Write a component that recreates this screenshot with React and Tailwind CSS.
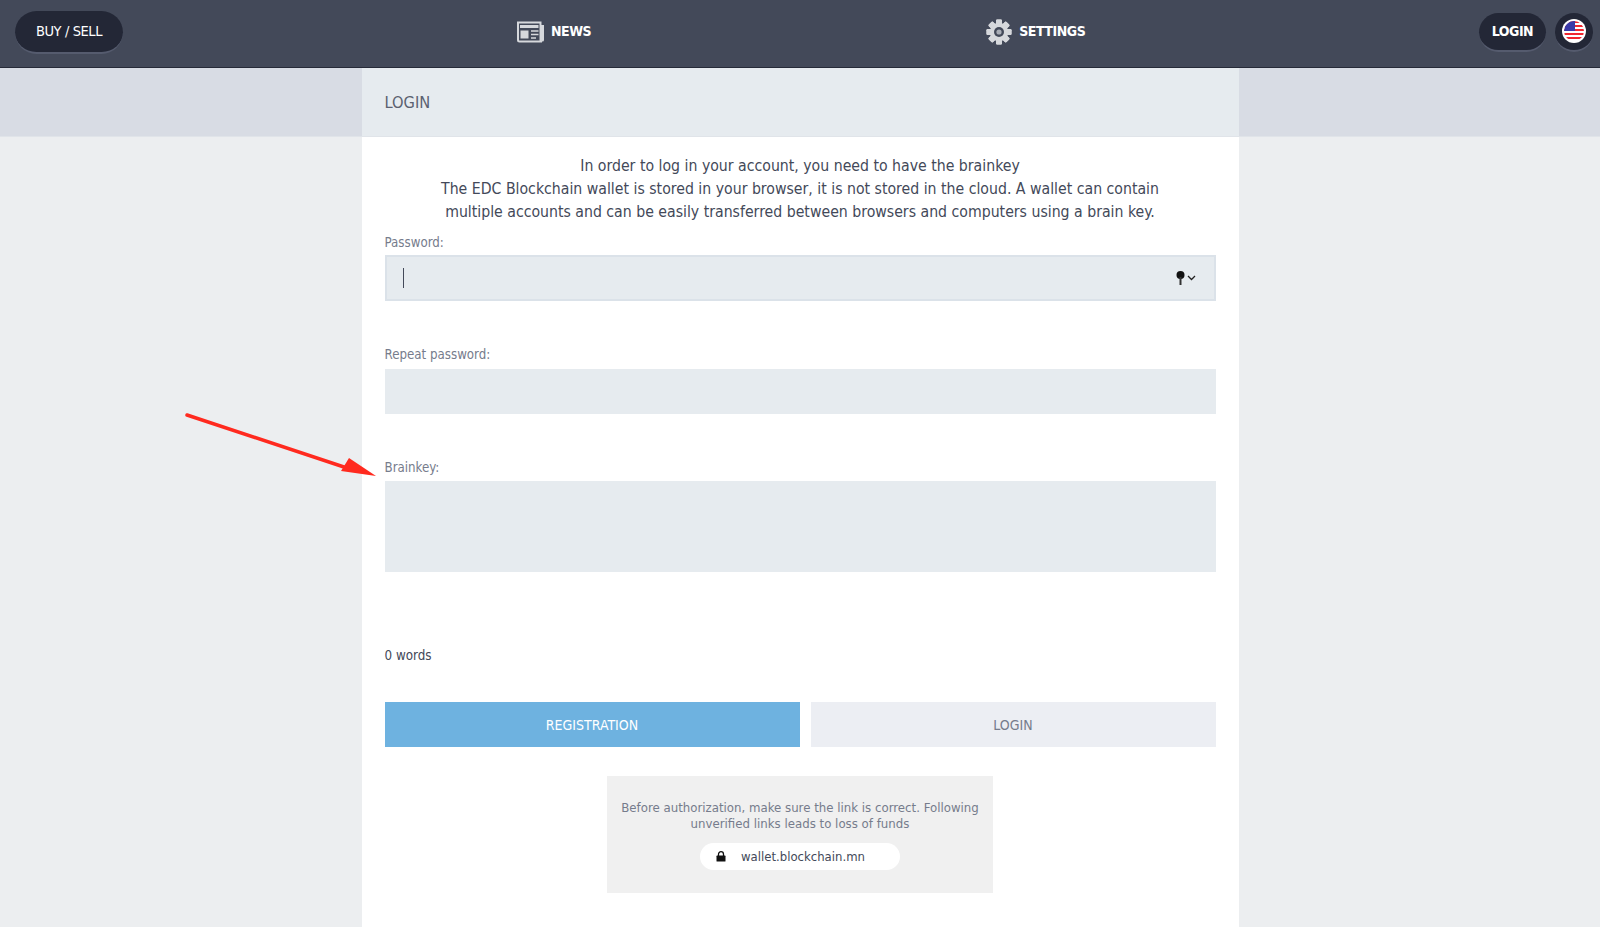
import React from "react";

function NewsIcon() {
  return (
    <svg width="28" height="22" viewBox="0 0 28 22" className="shrink-0">
      <path d="M1 1.500h22.500V19a1.500 1.500 0 0 0 1.500 1.500H2.500A1.500 1.500 0 0 1 1 19z" fill="none" stroke="#d6d8dc" strokeWidth="2" />
      <path d="M24.500 4H27v15a1.500 1.500 0 0 1-3 0V4z" fill="#d6d8dc" />
      <rect x="3" y="4" width="18.500" height="3" fill="#d6d8dc" />
      <rect x="3.500" y="9.500" width="8" height="8" fill="#d6d8dc" />
      <path d="M14 10h7.500M14 13.500h7.500M14 17h5" stroke="#d6d8dc" strokeWidth="1.600" />
    </svg>
  );
}

function GearIcon() {
  const teeth = [0, 45, 90, 135, 180, 225, 270, 315];
  return (
    <svg width="26" height="26" viewBox="0 0 26 26" className="shrink-0">
      {teeth.map((a) => (
        <rect key={a} x="10" y="0.500" width="6" height="25" rx="1.200" fill="#d6d8dc" transform={`rotate(${a} 13 13)`} />
      ))}
      <circle cx="13" cy="13" r="9.200" fill="#d6d8dc" />
      <circle cx="13" cy="13" r="5" fill="#434959" />
      <circle cx="13" cy="13" r="2.600" fill="#a9adb6" />
    </svg>
  );
}

function Flag() {
  return (
    <svg width="24" height="24" viewBox="0 0 24 24">
      <defs>
        <clipPath id="flagclip"><circle cx="12" cy="12" r="10" /></clipPath>
      </defs>
      <circle cx="12" cy="12" r="12" fill="#ffffff" />
      <g clipPath="url(#flagclip)">
        <rect x="0" y="0" width="24" height="24" fill="#ffffff" />
        <path d="M2 3h20M2 7h20M2 11h20M2 15h20M2 19h20" stroke="#f0262f" strokeWidth="2" />
        <rect x="0" y="0" width="13" height="12" fill="#3a3aa8" />
      </g>
    </svg>
  );
}

function Pill({ className, children }) {
  return (
    <div className={`flex items-center justify-center rounded-full bg-[#232736] border-b-2 border-[#555b6e] text-white ${className}`}>
      {children}
    </div>
  );
}

export default function App() {
  return (
    <div
      className="relative h-[927px] overflow-hidden bg-[#eceef0] text-[#434959]"
      style={{ fontFamily: '"DejaVu Sans Condensed", "DejaVu Sans", sans-serif' }}
    >
      <header className="flex h-[68px] items-center border-b border-[#262a38] bg-[#434959] pl-[15px] pr-[7px] pb-[3px]">
        <Pill className="h-[43px] w-[108px] pt-[2px] text-[14.500px] tracking-[-0.4px]">BUY / SELL</Pill>
        <div className="ml-[394px] flex items-center gap-[6px] text-[14px] font-bold tracking-[-0.500px] text-white">
          <NewsIcon />
          <span className="-mt-[1px]">NEWS</span>
        </div>
        <div className="ml-[395px] flex items-center gap-[7px] text-[14px] font-bold tracking-[-0.450px] text-white">
          <GearIcon />
          <span className="-mt-[1px]">SETTINGS</span>
        </div>
        <Pill className="ml-auto h-[39px] w-[67px] text-[14px] font-bold tracking-[-0.500px]">LOGIN</Pill>
        <div className="ml-[9px] flex h-[39px] w-[38px] items-center justify-center rounded-full border-b-2 border-[#555b6e] bg-[#232736]">
          <Flag />
        </div>
      </header>

      <div className="flex h-[69px] justify-center border-b border-[#e0e4e9] bg-[#d8dce4]">
        <div className="flex w-[877px] items-center bg-[#e6ebef] px-[23px] pt-[2px] text-[16.300px] text-[#5b6170]">
          LOGIN
        </div>
      </div>

      <main className="mx-auto h-[790px] w-[877px] bg-white px-[23px] pt-[17px]">
        <p className="text-center text-[15.700px] leading-[23px] text-[#434959]">
          In order to log in your account, you need to have the brainkey
          <br />
          The EDC Blockchain wallet is stored in your browser, it is not stored in the cloud. A wallet can contain
          <br />
          multiple accounts and can be easily transferred between browsers and computers using a brain key.
        </p>

        <label className="mt-[10px] block text-[13.200px] leading-[20px] text-[#767c8c]">Password:</label>
        <div className="mt-[2px] flex h-[46px] items-center justify-between border-2 border-[#dbe2e9] bg-[#e6ebef] pl-[16px] pr-[18px]">
          <div className="h-[20px] w-px bg-[#434959]" />
          <div className="flex items-center gap-[2px]">
            <svg width="9" height="14" viewBox="0 0 9 14">
              <circle cx="4.500" cy="4" r="4" fill="#111" />
              <rect x="3.500" y="6" width="2" height="8" fill="#333" />
            </svg>
            <svg width="9" height="6" viewBox="0 0 9 6">
              <path d="M1 1l3.500 3.500L8 1" fill="none" stroke="#222" strokeWidth="1.300" />
            </svg>
          </div>
        </div>

        <label className="mt-[44px] block text-[13.200px] leading-[20px] text-[#767c8c]">Repeat password:</label>
        <div className="mt-[4px] h-[45px] bg-[#e6ebef]" />

        <label className="mt-[44px] block text-[13.200px] leading-[20px] text-[#767c8c]">Brainkey:</label>
        <div className="mt-[3px] h-[91px] bg-[#e6ebef]" />

        <div className="mt-[74px] text-[13.300px] leading-[20px] text-[#434959]">0 words</div>

        <div className="mt-[36px] flex gap-[11px]">
          <div className="flex h-[45px] w-[415px] items-center justify-center bg-[#6eb2e0] pt-[1px] text-[14px] text-white">
            REGISTRATION
          </div>
          <div className="flex h-[45px] flex-1 items-center justify-center bg-[#eceef3] pt-[1px] text-[14px] text-[#767c8c]">
            LOGIN
          </div>
        </div>

        <div className="mx-auto mt-[29px] h-[117px] w-[386px] bg-[#f0f0f0] px-[6px] pt-[24px]">
          <p className="text-center text-[13.100px] leading-[16px] text-[#767c8c]">
            Before authorization, make sure the link is correct. Following unverified links leads to loss of funds
          </p>
          <div className="mx-auto mt-[11px] flex h-[27px] w-[200px] items-center rounded-full bg-white pl-[16px] text-[13px] text-[#434959]">
            <svg width="10" height="11" viewBox="0 0 10 11" className="shrink-0">
              <path d="M2.500 5V3.200a2.500 2.500 0 0 1 5 0V5" fill="none" stroke="#111" strokeWidth="1.300" />
              <rect x="0.500" y="4.600" width="9" height="6" rx="0.600" fill="#111" />
            </svg>
            <span className="ml-[15px]">wallet.blockchain.mn</span>
          </div>
        </div>
      </main>

      <svg className="pointer-events-none absolute left-[180px] top-[408px]" width="200" height="76" viewBox="0 0 200 76">
        <path d="M7 7L170 61" stroke="#ff2a1f" strokeWidth="3.500" strokeLinecap="round" />
        <path d="M196 68L161 63L169 50z" fill="#ff2a1f" />
      </svg>
    </div>
  );
}
